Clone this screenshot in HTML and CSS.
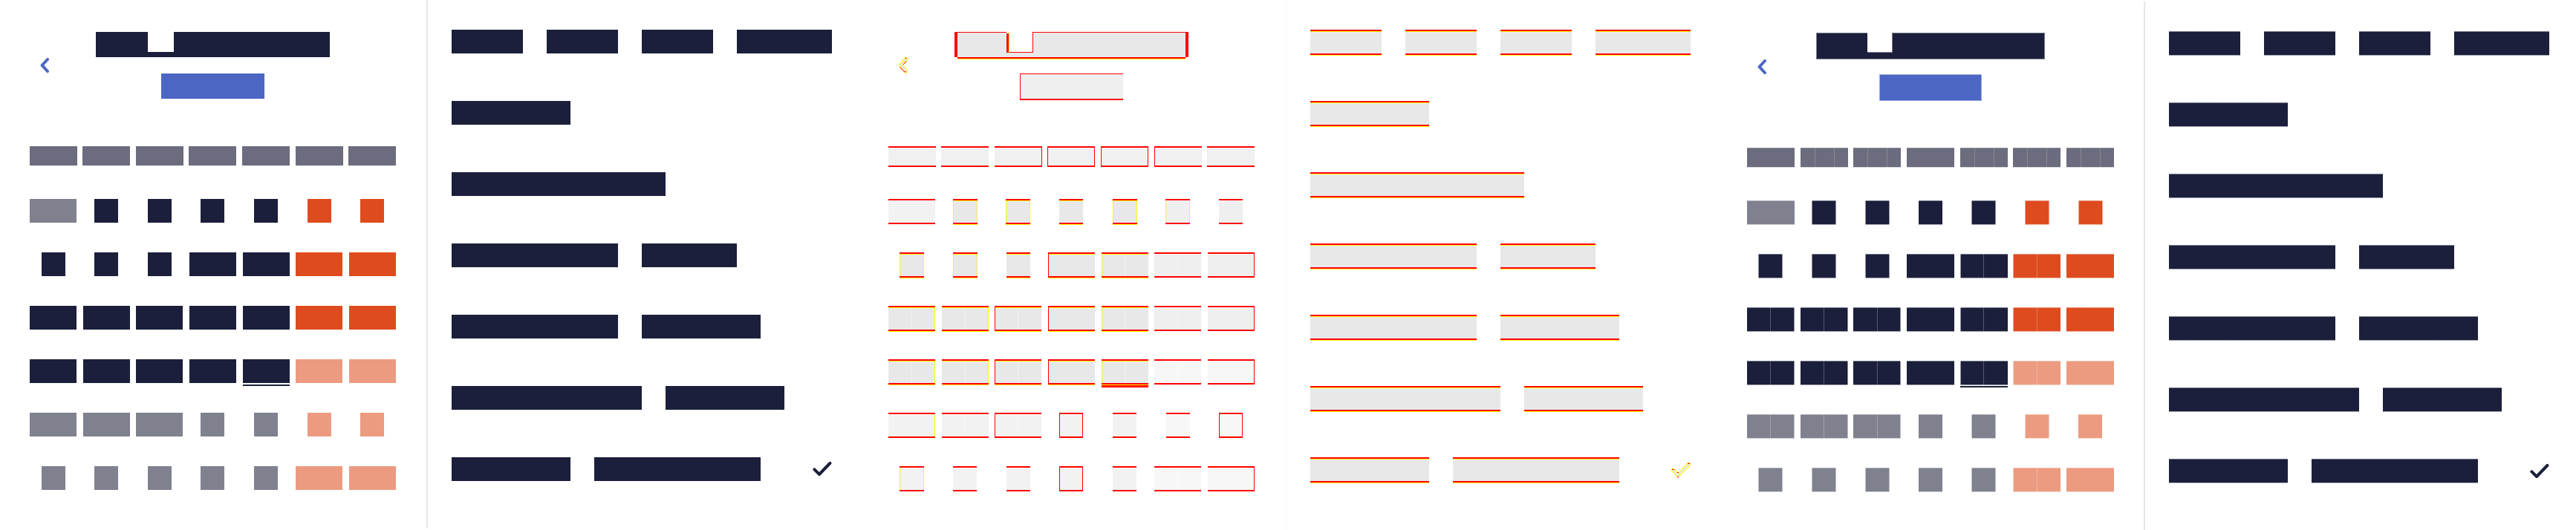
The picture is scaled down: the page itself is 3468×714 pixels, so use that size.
FILE: index.html
```html
<!DOCTYPE html>
<html lang="en">
<head>
<meta charset="utf-8">
<meta name="viewport" content="width=device-width, initial-scale=1">
<title>Date picker comparison</title>
<link rel="stylesheet" href="styles.css">
</head>
<body>
<main class="compare">

<section class="panel expected" aria-label="Expected">
  <div class="calendar">
    <header class="head">
      <button class="back" aria-label="Previous month"><svg width="12" height="20" viewBox="0 0 12 20"><path class="line" d="M10 2 2.6 10 10 18"/></svg></button>
      <div class="titles"><div class="title"><i class="notch"></i></div><div class="subtitle"></div></div>
    </header>
    <div class="weekdays"><b></b><b></b><b></b><b></b><b></b><b></b><b></b></div>
    <div class="days">
      <button class="muted wide"></button><button></button><button></button><button></button><button></button><button class="hot"></button><button class="hot"></button>
      <button></button><button></button><button></button><button class="wide"></button><button class="wide"></button><button class="hot wide"></button><button class="hot wide"></button>
      <button class="wide"></button><button class="wide"></button><button class="wide"></button><button class="wide"></button><button class="wide"></button><button class="hot wide"></button><button class="hot wide"></button>
      <button class="wide"></button><button class="wide"></button><button class="wide"></button><button class="wide"></button><button class="wide today"></button><button class="soft wide"></button><button class="soft wide"></button>
      <button class="muted wide"></button><button class="muted wide"></button><button class="muted wide"></button><button class="muted"></button><button class="muted"></button><button class="soft"></button><button class="soft"></button>
      <button class="muted"></button><button class="muted"></button><button class="muted"></button><button class="muted"></button><button class="muted"></button><button class="soft wide"></button><button class="soft wide"></button>
    </div>
  </div>
  <ul class="options">
    <li><button class="option"><i class="w3"></i><i class="w3"></i><i class="w3"></i><i class="w4"></i></button></li>
    <li><button class="option"><i class="w5"></i></button></li>
    <li><button class="option"><i class="w9"></i></button></li>
    <li><button class="option"><i class="w7"></i><i class="w4"></i></button></li>
    <li><button class="option"><i class="w7"></i><i class="w5"></i></button></li>
    <li><button class="option"><i class="w8"></i><i class="w5"></i></button></li>
    <li><button class="option" aria-pressed="true"><i class="w5"></i><i class="w7"></i><svg class="check" width="26" height="20" viewBox="0 0 26 20"><path class="line" d="M2.4 10.4 9 17 23.4 2"/></svg></button></li>
  </ul>
</section>

<section class="panel diff" aria-label="Difference">
  <div class="calendar">
    <header class="head">
      <button class="back" aria-label="Previous month"><svg width="12" height="22" viewBox="0 0 12 22"><path class="outline" d="M9.6 2.4 2.6 10.6 9.6 19"/><path class="core" d="M9.6 2.4 2.6 10.6 9.6 19"/><path class="mark" d="M8.5 1.5h2M10.500 5.500 6 10M1.500 13 7 19.500 10 20"/></svg></button>
      <div class="titles"><div class="title"><i class="notch"></i></div><div class="subtitle"></div></div>
    </header>
    <div class="weekdays"><b></b><b class="split3"></b><b class="split3 rr"></b><b class="lr rr"></b><b class="split3 lr rr"></b><b class="split3 lr"></b><b class="split3"></b></div>
    <div class="days">
      <button class="muted wide"></button><button class="ly ry"></button><button class="ly ry"></button><button></button><button class="ly ry"></button><button class="hot ly ry"></button><button class="hot"></button>
      <button class="ly ry"></button><button class="ly ry"></button><button></button><button class="wide lr"></button><button class="wide split ly"></button><button class="hot wide split"></button><button class="hot wide rr"></button>
      <button class="wide split ry"></button><button class="wide split ry"></button><button class="wide split lr"></button><button class="wide lr"></button><button class="wide split ly"></button><button class="hot wide split"></button><button class="hot wide rr"></button>
      <button class="wide split ry"></button><button class="wide split ry"></button><button class="wide split lr"></button><button class="wide lr"></button><button class="wide split ly today"></button><button class="soft wide split"></button><button class="soft wide rr"></button>
      <button class="muted wide split ry"></button><button class="muted wide split"></button><button class="muted wide split lr"></button><button class="muted lr rr"></button><button class="muted"></button><button class="soft"></button><button class="soft lr rr"></button>
      <button class="muted ly ry"></button><button class="muted"></button><button class="muted"></button><button class="muted lr rr"></button><button class="muted"></button><button class="soft wide split"></button><button class="soft wide rr"></button>
    </div>
  </div>
  <ul class="options">
    <li><button class="option"><i class="w3"></i><i class="w3"></i><i class="w3"></i><i class="w4"></i></button></li>
    <li><button class="option"><i class="w5"></i></button></li>
    <li><button class="option"><i class="w9"></i></button></li>
    <li><button class="option"><i class="w7"></i><i class="w4"></i></button></li>
    <li><button class="option"><i class="w7"></i><i class="w5"></i></button></li>
    <li><button class="option"><i class="w8"></i><i class="w5"></i></button></li>
    <li><button class="option" aria-pressed="true"><i class="w5"></i><i class="w7"></i><svg class="check" width="26" height="22" viewBox="0 0 26 22"><path class="outline" d="M2.500 10.500 9 17.500 23.500 2.500"/><path class="core" d="M2.500 10.500 9 17.500 23.500 2.500"/><path class="mark" d="M1 9.500h3M8 13.500h2M8 19.500h2M22 1.500h3"/></svg></button></li>
  </ul>
</section>

<section class="panel actual" aria-label="Actual">
  <div class="calendar">
    <header class="head">
      <button class="back" aria-label="Previous month"><svg width="12" height="20" viewBox="0 0 12 20"><path class="line" d="M10 2 2.6 10 10 18"/></svg></button>
      <div class="titles"><div class="title"><i class="notch"></i></div><div class="subtitle"></div></div>
    </header>
    <div class="weekdays"><b></b><b class="split3"></b><b class="split3"></b><b></b><b class="split3"></b><b class="split3"></b><b class="split3"></b></div>
    <div class="days">
      <button class="muted wide"></button><button class="ly ry"></button><button class="ly ry"></button><button></button><button class="ly ry"></button><button class="hot ly ry"></button><button class="hot ly ry"></button>
      <button class="ly ry"></button><button class="ly ry"></button><button class="ly ry"></button><button class="wide"></button><button class="wide split ly"></button><button class="hot wide split ly"></button><button class="hot wide"></button>
      <button class="wide split ry"></button><button class="wide split ry"></button><button class="wide split ry"></button><button class="wide"></button><button class="wide split ly"></button><button class="hot wide split ly"></button><button class="hot wide"></button>
      <button class="wide split ry"></button><button class="wide split ry"></button><button class="wide split ry"></button><button class="wide"></button><button class="wide split ly today"></button><button class="soft wide split ly"></button><button class="soft wide"></button>
      <button class="muted wide split ry"></button><button class="muted wide split ry"></button><button class="muted wide split ry"></button><button class="muted"></button><button class="muted ly ry"></button><button class="soft ly ry"></button><button class="soft"></button>
      <button class="muted ly ry"></button><button class="muted ly ry"></button><button class="muted ly ry"></button><button class="muted"></button><button class="muted ly ry"></button><button class="soft wide split ly"></button><button class="soft wide"></button>
    </div>
  </div>
  <ul class="options">
    <li><button class="option"><i class="w3"></i><i class="w3"></i><i class="w3"></i><i class="w4"></i></button></li>
    <li><button class="option"><i class="w5"></i></button></li>
    <li><button class="option"><i class="w9"></i></button></li>
    <li><button class="option"><i class="w7"></i><i class="w4"></i></button></li>
    <li><button class="option"><i class="w7"></i><i class="w5"></i></button></li>
    <li><button class="option"><i class="w8"></i><i class="w5"></i></button></li>
    <li><button class="option" aria-pressed="true"><i class="w5"></i><i class="w7"></i><svg class="check" width="26" height="20" viewBox="0 0 26 20"><path class="line" d="M2.4 10.4 9 17 23.4 2"/></svg></button></li>
  </ul>
</section>

</main>
</body>
</html>
```

FILE: styles.css
```css
* { box-sizing: border-box; }

body {
  margin: 0;
  background: #fff;
  font-family: "Liberation Sans", sans-serif;
}

button {
  margin: 0;
  padding: 0;
  border: 0;
  background: none;
  cursor: pointer;
}

.compare {
  display: grid;
  grid-template-columns: repeat(3, 1fr);
  min-height: 100vh;
}

.panel {
  --navy: #1b1f3b;
  --blue: #4c66c3;
  --weekday: #6b6c7e;
  --muted: #7f818f;
  --hot: #de4b1f;
  --soft: #ec9b80;
  --divider: #e5e5e5;
  --block: 32px;
  --wide: 63px;
  display: grid;
  grid-template-columns: 576fr 580fr;
}

/* Calendar side */

.calendar {
  padding: 43px 37px 0 36px;
  border-right: 2px solid var(--divider);
}

.expected .calendar { margin-bottom: 2px; }

.head {
  display: grid;
  grid-template-columns: 48px 1fr 48px;
  height: 154px;
}

.back {
  display: flex;
  align-items: center;
  justify-content: center;
  height: 90px;
}

.line {
  fill: none;
  stroke: var(--navy);
  stroke-width: 4;
  stroke-linecap: round;
  stroke-linejoin: round;
}

.back .line { stroke: var(--blue); }

.titles {
  display: grid;
  grid-template-rows: 56px 56px;
  align-items: start;
  justify-items: center;
}

.title {
  width: 315px;
  height: 34px;
  padding-left: 70px;
  background: var(--navy);
}

.notch {
  display: block;
  width: 35px;
  height: 27px;
  background: #fff;
}

.subtitle {
  width: 139px;
  height: 34px;
  background: var(--blue);
}

.weekdays,
.days {
  display: grid;
  grid-template-columns: repeat(7, 1fr);
  align-items: start;
  justify-items: center;
}

.weekdays { height: 71px; }

.weekdays b {
  --c: var(--weekday);
  width: 64px;
  height: 26px;
  background: var(--c);
}

.days { grid-auto-rows: 72px; }

.days button {
  --c: var(--navy);
  width: 32px;
  height: var(--block);
  background: var(--c);
}

.days .wide { width: var(--wide); }
.days .muted { --c: var(--muted); }
.days .hot { --c: var(--hot); }
.days .soft { --c: var(--soft); }

.today { position: relative; }

.today::after {
  content: "";
  position: absolute;
  top: 34px;
  left: 0;
  width: 100%;
  height: 2px;
  background: var(--navy);
}

/* Option list side */

.options {
  margin: 0;
  padding: 40px 36px 0 32px;
  list-style: none;
}

.options li { height: 96px; }

.option {
  display: flex;
  gap: 32px;
  width: 100%;
  align-items: center;
}

.option i {
  --c: var(--navy);
  height: var(--block);
  background: var(--c);
}

.w3 { width: 96px; }
.w4 { width: 128px; }
.w5 { width: 160px; }
.w7 { width: 224px; }
.w8 { width: 256px; }
.w9 { width: 288px; }

.check { margin-left: auto; }

/* Difference view: grey bodies with red and yellow changed edges */

.diff {
  --navy: #e8e8e8;
  --weekday: #f0f0f0;
  --muted: #f2f2f2;
  --hot: #efefef;
  --soft: #f7f7f7;
  --divider: #fcfcfc;
  --red: #f00;
  --yellow: #ff0;
  --block: 35px;
}

.diff .calendar,
.actual .calendar { margin-top: 2px; }

.diff .calendar { padding-top: 41px; }

.diff .title {
  height: 37px;
  background:
    linear-gradient(var(--red), var(--red)) 0 0 / 4px 34px no-repeat,
    linear-gradient(var(--red), var(--red)) 100% 0 / 4px 34px no-repeat,
    linear-gradient(var(--red), var(--red)) 0 0 / 100% 1px no-repeat,
    linear-gradient(var(--navy) 34px, var(--red) 34px 36px, var(--yellow) 36px) 4px 0 / 307px 100% no-repeat;
}

.diff .notch {
  width: 36px;
  height: 28px;
  background:
    linear-gradient(var(--red), var(--red)) 0 100% / 3px 26px no-repeat,
    linear-gradient(var(--yellow), var(--yellow)) 3px 0 / 1px 100% no-repeat,
    linear-gradient(var(--red), var(--red)) 100% 0 / 1px 100% no-repeat,
    linear-gradient(var(--red), var(--red)) 0 100% / 100% 1px no-repeat,
    #fff;
}

.diff .subtitle {
  height: 36px;
  border: solid var(--red);
  border-width: 1px 0 2px 1px;
  background: #efefef;
}

.diff .weekdays b,
.diff .days button,
.diff .option i {
  --l: transparent;
  --r: transparent;
  --m: transparent;
  --warn: #fff;
  background:
    linear-gradient(var(--l), var(--l)) 0 2px / 1px calc(100% - 5px) no-repeat,
    linear-gradient(var(--r), var(--r)) 100% 2px / 1px calc(100% - 5px) no-repeat,
    linear-gradient(var(--m), var(--m)) 50% 3px / 1px calc(100% - 6px) no-repeat,
    linear-gradient(var(--red) 2px, var(--warn) 2px 3px, var(--c) 3px calc(100% - 3px), var(--red) calc(100% - 3px) calc(100% - 1px), var(--warn) calc(100% - 1px));
}

.diff .weekdays b { height: 29px; }

.diff .days button,
.diff .option i { --warn: var(--yellow); }

.diff .days .muted,
.diff .days .hot,
.diff .days .soft { --warn: #fff; }

.diff .days .split { --m: #f2f2f2; }
.diff .days .muted.split,
.diff .days .hot.split { --m: #f6f6f6; }
.diff .days .soft.split { --m: #fcfcfc; }
.diff .days .ly { --l: var(--yellow); }
.diff .days .ry { --r: var(--yellow); }

.diff .weekdays .lr,
.diff .days .lr { --l: var(--red); }

.diff .weekdays .rr,
.diff .days .rr { --r: var(--red); }

.diff .days .ly.ry { width: 33px; }

.diff .today::after {
  top: 35px;
  height: 3px;
  background: var(--red);
}

.outline,
.core,
.mark {
  fill: none;
  stroke-linecap: round;
  stroke-linejoin: round;
}

.outline { stroke: var(--yellow); stroke-width: 5; }
.core { stroke: #e8e8e8; stroke-width: 3; }
.mark { stroke: var(--red); stroke-width: 1; stroke-linecap: butt; }

/* Actual view: softened edges */

.actual {
  --block: 33px;
  --wide: 64px;
}

.actual .calendar { padding: 42px 36px 0; }
.actual .head { height: 155px; }
.actual .back { height: 92px; }

.actual .title {
  width: 308px;
  height: 36px;
  padding-left: 68px;
  border: 1px solid #7b7d90;
}

.actual .notch {
  width: 34px;
  height: 27px;
  margin-top: -1px;
  border: solid #7b7d90;
  border-width: 0 1px 1px 0;
}

.actual .subtitle {
  width: 138px;
  height: 36px;
  border: 1px solid #98a8de;
}

.actual .weekdays b,
.actual .days button,
.actual .option i {
  --l: transparent;
  --r: transparent;
  --m: transparent;
  background:
    linear-gradient(rgba(255, 255, 255, .4) 1px, transparent 1px calc(100% - 1px), rgba(255, 255, 255, .6) calc(100% - 1px)),
    linear-gradient(var(--l), var(--l)) 0 0 / 1px 100% no-repeat,
    linear-gradient(var(--r), var(--r)) 100% 0 / 1px 100% no-repeat,
    linear-gradient(var(--m), var(--m)) 50% 0 / 1px 100% no-repeat,
    var(--c);
}

.actual .weekdays b {
  height: 27px;
  background:
    linear-gradient(rgba(255, 255, 255, .2) 1px, transparent 1px calc(100% - 1px), rgba(255, 255, 255, .8) calc(100% - 1px)),
    linear-gradient(var(--m), var(--m)) 19px 0 / 1px 100% no-repeat,
    linear-gradient(var(--m), var(--m)) 45px 0 / 1px 100% no-repeat,
    var(--c);
}

.actual .weekdays .split3 { --m: rgba(255, 255, 255, .18); }
.actual .days .split { --m: rgba(255, 255, 255, .25); }
.actual .days .ly { --l: rgba(255, 255, 255, .5); }
.actual .days .ry { --r: rgba(255, 255, 255, .5); }
.actual .days .ly.ry { width: 33px; }

.actual .options { padding-top: 42px; }
```
